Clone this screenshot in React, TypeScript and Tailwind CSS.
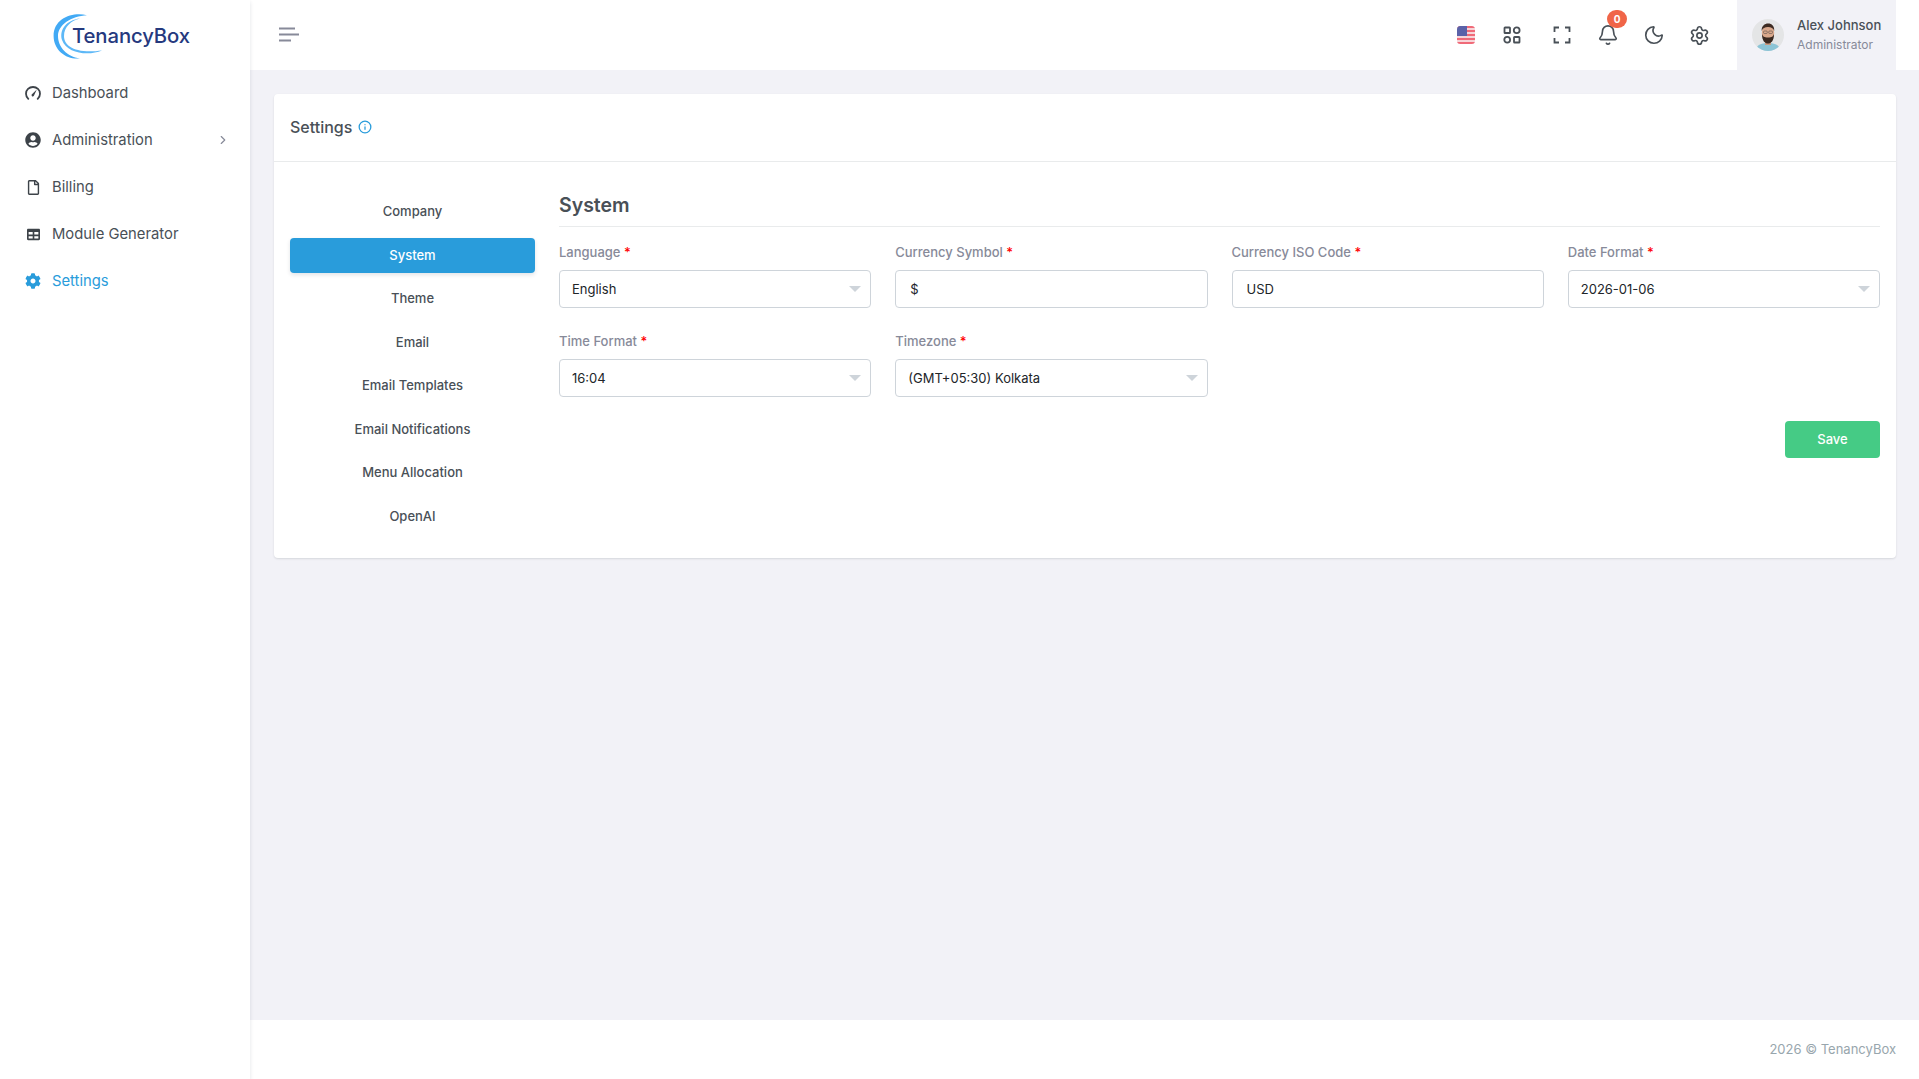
import React from "react";
import { Bell, ChevronRight, Info, Moon, Settings as Gear } from "lucide-react";
import { FaUserCircle, FaRegFile, FaTable, FaCog } from "react-icons/fa";

function Gauge() {
  return (
    <svg width="16" height="14" viewBox="0 0 16 14" fill="none">
      <path d="M3.300 12.800C1.900 11.500 1 9.700 1 7.700C1 3.900 4.100 1 8 1C11.900 1 15 3.900 15 7.700C15 9.700 14.100 11.500 12.700 12.800" stroke="#3d4349" strokeWidth="1.800" strokeLinecap="round" />
      <path d="M11.800 3.400L8.900 9.800C8.500 10.700 7.300 10.800 6.800 10C6.400 9.300 6.600 8.500 7.200 8.100Z" fill="#3d4349" />
    </svg>
  );
}

const nav = [
  { label: "Dashboard", icon: <Gauge /> },
  { label: "Administration", icon: <FaUserCircle size={16} />, chevron: true },
  { label: "Billing", icon: <FaRegFile size={15} /> },
  { label: "Module Generator", icon: <FaTable size={13} /> },
  { label: "Settings", icon: <FaCog size={16} />, active: true },
];

const tabs = ["Company", "System", "Theme", "Email", "Email Templates", "Email Notifications", "Menu Allocation", "OpenAI"];

function Logo() {
  return (
    <div className="relative ml-[53px] mt-[13px] h-[46px] w-[138px]">
      <svg className="absolute left-0 top-0" width="60" height="46" viewBox="0 0 60 46" fill="none">
        <path d="M34 2.200C20 -1.500 0.500 5 0.600 23C0.700 38 14 47 27 45.400C14 44 5 34 5 23C5 12 18 3 34 2.200Z" fill="#42aaf5" />
        <path d="M27 5.500C18 7.500 11 14 11 23C11 33 22 41 49 37.500C36 43 14 41 9 27C6 16 14 7 27 5.500Z" fill="#5db8f7" />
      </svg>
      <span className="absolute left-[19px] top-[7.500px] text-[20.300px] leading-[30px] font-medium tracking-[-0.1px] text-[#25397e] font-['Inter',sans-serif]">TenancyBox</span>
    </div>
  );
}

function Flag() {
  return (
    <svg width="18" height="18" viewBox="0 0 18 18">
      <defs>
        <clipPath id="flagclip"><rect width="18" height="18" rx="3.500" /></clipPath>
      </defs>
      <g clipPath="url(#flagclip)">
        <rect width="18" height="18" fill="#f7d5d9" />
        <rect y="0" width="18" height="2" fill="#f06a78" />
        <rect y="4" width="18" height="2" fill="#f06a78" />
        <rect y="8" width="18" height="2" fill="#f06a78" />
        <rect y="12" width="18" height="2" fill="#f06a78" />
        <rect y="16" width="18" height="2" fill="#f06a78" />
        <rect width="10" height="10" fill="#5b62a8" />
      </g>
    </svg>
  );
}

function Apps() {
  return (
    <svg width="18" height="18" viewBox="0 0 18 18" fill="none" stroke="#495057" strokeWidth="1.800">
      <rect x="1.500" y="1.500" width="5.500" height="5.500" rx="0.600" />
      <circle cx="13.700" cy="4.200" r="2.900" />
      <circle cx="4.200" cy="13.700" r="2.900" />
      <rect x="11" y="11" width="5.500" height="5.500" rx="0.600" />
    </svg>
  );
}

function Full() {
  return (
    <svg width="18" height="18" viewBox="0 0 18 18" fill="none" stroke="#495057" strokeWidth="1.800">
      <path d="M1.500 6V1.500H6M12 1.500h4.500V6M16.500 12v4.500H12M6 16.500H1.500V12" />
    </svg>
  );
}

function Avatar() {
  return (
    <svg width="32" height="32" viewBox="0 0 32 32" className="shrink-0">
      <defs>
        <clipPath id="avclip"><circle cx="16" cy="16" r="16" /></clipPath>
      </defs>
      <g clipPath="url(#avclip)">
        <rect width="32" height="32" fill="#e4e5e6" />
        <path d="M4 32c0-6 5-8 12-8s12 2 12 8z" fill="#8cc4d6" />
        <rect x="13" y="19" width="6" height="7" fill="#c99a80" />
        <ellipse cx="16" cy="14" rx="6.200" ry="8" fill="#d9a88c" />
        <path d="M10 15c0 7 3 9.500 6 9.500s6-2.500 6-9.500c-1 2.500-2 3.500-6 3.500s-5-1-6-3.500z" fill="#3a2a22" />
        <path d="M9.700 12c-.5-5 3-7.500 6.500-7.500s6.500 2.500 6 7.500c-1-3-3-4-6.200-4s-5.300 1-6.300 4z" fill="#3d2b22" />
        <rect x="11.500" y="12" width="3.800" height="2.500" rx="1" fill="none" stroke="#444" strokeWidth="0.500" />
        <rect x="16.700" y="12" width="3.800" height="2.500" rx="1" fill="none" stroke="#444" strokeWidth="0.500" />
      </g>
    </svg>
  );
}

function Field({ label, value, select }: { label: string; value: string; select?: boolean }) {
  return (
    <div className="flex min-w-0 flex-col">
      <div className="mb-[8px] text-[13px] leading-[20px] font-medium text-[#878a99]">
        {label} <span className="text-[#ff0000]">*</span>
      </div>
      {select ? (
        <div className="relative">
          <select
            defaultValue={value}
            className="h-[38px] w-full appearance-none rounded-[4px] border border-[#ced4da] bg-white pl-[12px] pr-[30px] pt-[1px] text-[13px] text-[#212529] outline-none"
          >
            <option>{value}</option>
          </select>
          <span className="pointer-events-none absolute right-[10px] top-[16px] h-0 w-0 border-x-[6px] border-t-[6px] border-x-transparent border-t-[#ced4da]" />
        </div>
      ) : (
        <input
          defaultValue={value}
          className="h-[38px] w-full rounded-[4px] border border-[#ced4da] bg-white pb-[1px] pl-[14px] pr-[14px] text-[13px] text-[#212529] outline-none"
        />
      )}
    </div>
  );
}

export default function App() {
  return (
    <div className="flex h-[1079px] w-full bg-[#f2f2f7] font-['Inter',sans-serif] text-[#495057]">
      <aside className="relative z-10 flex w-[250px] shrink-0 flex-col bg-white shadow-[0_2px_4px_rgba(15,34,58,0.12)]">
        <Logo />
        <nav className="mt-[10.500px] flex flex-col">
          {nav.map((n) => (
            <div
              key={n.label}
              className={`flex h-[47px] items-center pl-[23px] pr-[20px] text-[14.800px] ${n.active ? "text-[#299cdb]" : "text-[#495057]"}`}
            >
              <span className={`flex w-[20px] justify-center ${n.active ? "text-[#299cdb]" : "text-[#3d4349]"}`}>{n.icon}</span>
              <span className="ml-[9px] flex-1">{n.label}</span>
              {n.chevron && <ChevronRight size={14} className="text-[#878a99]" />}
            </div>
          ))}
        </nav>
      </aside>

      <div className="flex min-w-0 flex-1 flex-col">
        <header className="flex h-[70px] shrink-0 items-center bg-white pl-[29px] pr-[23px]">
          <svg width="20" height="15" viewBox="0 0 20 15" stroke="#878a99" strokeWidth="2" className="mt-[-0.500px]">
            <path d="M0 1.500h16M0 7.500h20M0 13.500h12" />
          </svg>
          <div className="ml-auto flex h-full items-center">
            <div className="flex w-[46px] justify-center"><Flag /></div>
            <div className="flex w-[46px] justify-center"><Apps /></div>
            <div className="ml-[4px] flex w-[46px] justify-center"><Full /></div>
            <div className="relative flex w-[46px] justify-center">
              <Bell size={22} strokeWidth={1.800} color="#495057" />
              <span className="absolute left-[22px] top-[-14px] flex h-[18px] w-[20px] items-center justify-center rounded-full bg-[#f06548] text-[10px] font-bold text-white">0</span>
            </div>
            <div className="flex w-[46px] justify-center"><Moon size={22} strokeWidth={1.800} color="#495057" /></div>
            <div className="flex w-[45px] justify-center"><Gear size={21} strokeWidth={1.900} color="#495057" /></div>
            <div className="ml-[15px] flex h-full w-[159px] items-center bg-[#f2f2f7] pl-[15px]">
              <Avatar />
              <div className="ml-[13px] mt-[-2px] flex flex-col">
                <span className="text-[13px] leading-[20px] font-medium text-[#495057]">Alex Johnson</span>
                <span className="text-[12px] leading-[19px] text-[#878a99]">Administrator</span>
              </div>
            </div>
          </div>
        </header>

        <main className="flex-1 pl-[24px] pr-[23px] pt-[24px]">
          <section className="rounded-[4px] bg-white shadow-[0_1px_2px_rgba(56,65,74,0.15)]">
            <div className="flex h-[68px] items-center border-b border-[#e9ebec] px-[16px] pb-[2px]">
              <h2 className="text-[16px] font-medium text-[#495057]">Settings</h2>
              <Info size={14} strokeWidth={2.200} color="#299cdb" className="ml-[6px]" />
            </div>
            <div className="flex gap-[24px] p-[16px] pt-[32px]">
              <div className="flex w-[245px] shrink-0 flex-col">
                {tabs.map((t) => (
                  <div
                    key={t}
                    className={`mb-[8px] h-[35.500px] rounded-[4px] py-[8px] text-center text-[13px] leading-[19.500px] font-medium ${
                      t === "System" ? "bg-[#299cdb] text-white shadow-[0_2px_4px_rgba(15,34,58,0.12)]" : "text-[#495057]"
                    }`}
                  >
                    {t}
                  </div>
                ))}
              </div>
              <div className="min-w-0 flex-1">
                <h3 className="mb-[15px] mt-[-1px] border-b border-[#e9ebec] pb-[9px] text-[19.500px] leading-[24px] font-semibold text-[#495057]">System</h3>
                <div className="grid grid-cols-4 gap-x-[24px] gap-y-[23px]">
                  <Field label="Language" value="English" select />
                  <Field label="Currency Symbol" value="$" />
                  <Field label="Currency ISO Code" value="USD" />
                  <Field label="Date Format" value="2026-01-06" select />
                  <Field label="Time Format" value="16:04" select />
                  <Field label="Timezone" value="(GMT+05:30) Kolkata" select />
                </div>
                <div className="mt-[24px] flex justify-end">
                  <button className="h-[37px] w-[95px] rounded-[4px] bg-[#45cb85] text-[13px] font-medium text-white">Save</button>
                </div>
              </div>
            </div>
          </section>
        </main>

        <footer className="flex h-[59px] shrink-0 items-center justify-end bg-white pr-[23px] text-[13px] text-[#98a6ad]">
          2026 © TenancyBox
        </footer>
      </div>
    </div>
  );
}
